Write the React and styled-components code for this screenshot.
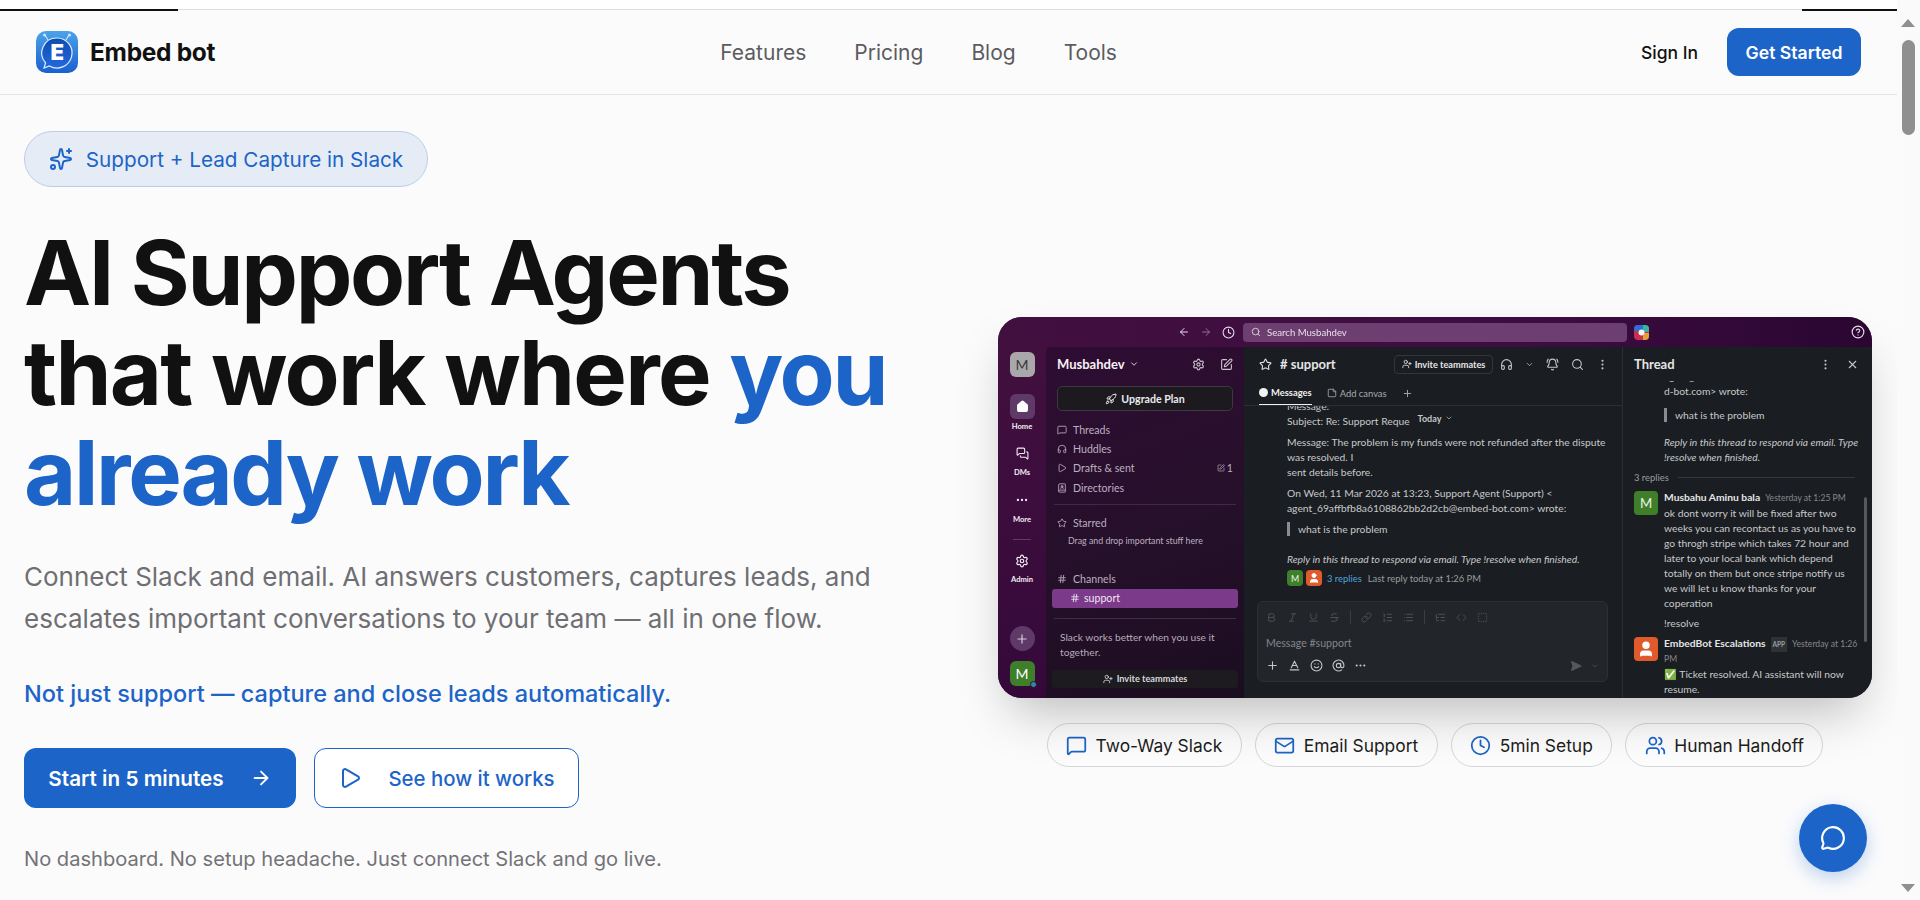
import styled, { createGlobalStyle } from "styled-components";
import {
  ArrowLeft,
  ArrowRight,
  AtSign,
  BellRing,
  Bold,
  ChevronDown,
  CircleHelp,
  Clock,
  Code,
  Ellipsis,
  EllipsisVertical,
  Hash,
  Headphones,
  House,
  Italic,
  Link,
  List,
  ListOrdered,
  ListTree,
  Mail,
  MessageCircle,
  MessageSquare,
  MessagesSquare,
  Play,
  Plus,
  Rocket,
  Search,
  SendHorizontal,
  Settings,
  Smile,
  SquarePen,
  SquareDashed,
  Star,
  Strikethrough,
  Underline,
  User,
  UserPlus,
  Users,
  X,
  BookUser,
  Sparkles,
  StickyNote,
  Baseline,
} from "lucide-react";

const BLUE = "#1c64c8";

const GlobalStyle = createGlobalStyle`
  * { box-sizing: border-box; }
  html, body { margin: 0; height: 900px; overflow: hidden; background: #fafafa; }
  body { font-family: Inter, "Liberation Sans", sans-serif; color: #111; }
`;

const Shell = styled.div`
  display: flex;
  width: 1920px;
  height: 900px;
`;

const Page = styled.div`
  position: relative;
  width: 1897px;
  height: 900px;
  overflow: hidden;
  background: #fbfbfc;
`;

const TopStrip = styled.div`
  position: relative;
  height: 10px;
  background: #fff;
  border-bottom: 1px solid #dcdcdf;
`;

const Loader = styled.div`
  position: absolute;
  top: 9px;
  height: 2px;
  background: #111;
  left: ${(p) => p.$left}px;
  width: ${(p) => p.$width}px;
`;

const Navbar = styled.header`
  height: 85px;
  padding: 0 36px;
  display: flex;
  align-items: center;
  justify-content: space-between;
  border-bottom: 1px solid #e3e4e8;
`;

const Brand = styled.div`
  display: flex;
  align-items: center;
  gap: 12px;
  font-size: 24.5px;
  font-weight: 700;
  letter-spacing: -0.3px;
  color: #111;
`;

const NavLinks = styled.nav`
  display: flex;
  gap: 48px;
  padding-right: 19px;
`;

const NavLink = styled.a`
  font-size: 21px;
  line-height: 28px;
  padding-top: 1px;
  color: #5c5c60;
`;

const NavRight = styled.div`
  display: flex;
  align-items: center;
  gap: 29px;
`;

const SignIn = styled.a`
  font-size: 17.5px;
  font-weight: 500;
  color: #111;
`;

const GetStarted = styled.button`
  width: 134px;
  height: 48px;
  border: 0;
  border-radius: 12px;
  background: ${BLUE};
  color: #fff;
  font: 600 17.6px Inter, sans-serif;
`;

const Hero = styled.main`
  display: grid;
  grid-template-columns: 1fr 874px;
  padding: 36px 25px 0 24px;
`;

const Left = styled.section`
  display: flex;
  flex-direction: column;
  align-items: flex-start;
`;

const Badge = styled.div`
  height: 56px;
  width: 404px;
  display: flex;
  align-items: center;
  justify-content: center;
  gap: 13px;
  border-radius: 28px;
  border: 1px solid #bccde9;
  background: #e6ecf5;
  color: ${BLUE};
  font-size: 20.7px;
  font-weight: 400;
`;

const Title = styled.h1`
  margin: 36px 0 0;
  font-size: 90px;
  line-height: 100px;
  font-weight: 700;
  letter-spacing: -2.3px;
  color: #111;
`;

const WideLine = styled.span`
  letter-spacing: -1.75px;
`;

const Accent = styled.span`
  color: ${BLUE};
`;

const Lede = styled.p`
  margin: 33px 0 0;
  font-size: 26px;
  line-height: 42px;
  color: #6f6f73;
`;

const Pitch = styled.p`
  margin: 38px 0 0;
  font-size: 23.5px;
  line-height: 32px;
  font-weight: 500;
  color: ${BLUE};
`;

const Actions = styled.div`
  display: flex;
  gap: 18px;
  margin-top: 38px;
`;

const PrimaryBtn = styled.button`
  width: 272px;
  height: 60px;
  display: flex;
  align-items: center;
  justify-content: center;
  gap: 26px;
  border: 0;
  border-radius: 12px;
  background: ${BLUE};
  color: #fff;
  font: 600 20.7px Inter, sans-serif;
`;

const GhostBtn = styled.button`
  width: 265px;
  height: 60px;
  display: flex;
  align-items: center;
  justify-content: center;
  gap: 26px;
  border: 1px solid ${BLUE};
  border-radius: 12px;
  background: #fff;
  color: ${BLUE};
  font: 500 20.4px Inter, sans-serif;
`;

const Note = styled.p`
  margin: 37px 0 0;
  font-size: 20.1px;
  line-height: 28px;
  color: #737377;
`;

const Right = styled.section`
  display: flex;
  flex-direction: column;
  align-items: stretch;
  margin-top: 186px;
`;

const Chips = styled.div`
  display: flex;
  justify-content: center;
  gap: 13px;
  margin-top: 25px;
`;

const Chip = styled.div`
  height: 44px;
  padding: 0 18.5px;
  display: flex;
  align-items: center;
  gap: 8.5px;
  border-radius: 22px;
  border: 1px solid #d4d6da;
  background: rgba(255, 255, 255, 0.35);
  font-size: 17.4px;
  color: #1d1d20;
  svg {
    color: ${BLUE};
  }
`;

const ChatFab = styled.button`
  position: absolute;
  left: 1799px;
  top: 804px;
  width: 68px;
  height: 68px;
  display: flex;
  align-items: center;
  justify-content: center;
  border: 0;
  border-radius: 50%;
  background: ${BLUE};
  color: #fff;
  box-shadow: 0 6px 18px rgba(28, 100, 200, 0.28);
`;

const ScrollTrack = styled.div`
  position: relative;
  width: 23px;
  height: 900px;
  background: #fafafa;
`;

const ScrollThumb = styled.div`
  position: absolute;
  left: 5px;
  top: 40px;
  width: 13px;
  height: 95px;
  border-radius: 7px;
  background: #8f8f8f;
`;

const ScrollArrow = styled.div`
  position: absolute;
  left: 4px;
  top: ${(p) => p.$top}px;
  border-left: 7.5px solid transparent;
  border-right: 7.5px solid transparent;
  ${(p) => (p.$down ? "border-top" : "border-bottom")}: 8px solid #8f8f8f;
`;

/* slack screenshot */

const SlackFrame = styled.div`
  position: relative;
  height: 381px;
  display: flex;
  flex-direction: column;
  border-radius: 24px;
  overflow: hidden;
  background: #3b0d3e;
  box-shadow: 0 25px 50px -12px rgba(0, 0, 0, 0.25);
  filter: blur(0.3px);
  font-family: Lato, "Liberation Sans", sans-serif;
  color: #d1d2d3;
  font-size: 10.3px;
`;

const SlackTop = styled.div`
  height: 30px;
  flex: none;
  display: flex;
  align-items: center;
  background: linear-gradient(90deg, #42103f, #3d0d42 60%, #2a0631);
  color: #e8dcea;
`;

const TopNav = styled.div`
  width: 245px;
  flex: none;
  display: flex;
  justify-content: flex-end;
  align-items: center;
  gap: 10px;
  padding-right: 8px;
`;

const SearchBar = styled.div`
  width: 384px;
  height: 19px;
  display: flex;
  align-items: center;
  gap: 6px;
  padding-left: 8px;
  border-radius: 4px;
  background: #6c3f70;
  color: #eadfeb;
  font-size: 9.6px;
`;

const WorkspaceIcon = styled.svg`
  margin-left: 7px;
`;

const HelpWrap = styled.div`
  margin-left: auto;
  padding-right: 7px;
  display: flex;
`;

const SlackBody = styled.div`
  flex: 1;
  min-height: 0;
  display: flex;
  background: linear-gradient(180deg, #42103f, #34093a);
`;

const Rail = styled.div`
  width: 48px;
  flex: none;
  display: flex;
  flex-direction: column;
  align-items: center;
  padding-top: 5px;
  color: #f3eef4;
`;

const RailSquare = styled.div`
  width: 25px;
  height: 25px;
  flex: none;
  display: flex;
  align-items: center;
  justify-content: center;
  border-radius: ${(p) => p.$radius || 6}px;
  background: ${(p) => p.$bg};
  color: ${(p) => p.$color || "#fff"};
  margin-top: ${(p) => p.$top || 0}px;
  font-size: 14px;
  position: relative;
`;

const RailIcon = styled.div`
  height: 17px;
  flex: none;
  display: flex;
  align-items: center;
  justify-content: center;
  margin-top: ${(p) => p.$top || 0}px;
`;

const RailLabel = styled.div`
  font-size: 7.6px;
  font-weight: 700;
  line-height: 10px;
  margin-top: ${(p) => p.$top || 0}px;
`;

const RailRule = styled.div`
  width: 18px;
  height: 1px;
  background: #5f3a62;
  margin-top: 15px;
`;

const StatusDot = styled.span`
  position: absolute;
  right: -2px;
  bottom: -2px;
  width: 7px;
  height: 7px;
  border-radius: 50%;
  background: #2b8a9f;
  border: 1px solid #34093a;
`;

const Sidebar = styled.div`
  width: 198px;
  flex: none;
  display: flex;
  flex-direction: column;
  padding: 0 6px;
  background: linear-gradient(160deg, #2f0c33 0%, #25102a 55%, #1b0d20 100%);
  border-top-left-radius: 5px;
  color: #bdaec0;
`;

const SideHead = styled.div`
  height: 34px;
  flex: none;
  display: flex;
  align-items: center;
  gap: 4px;
  padding: 0 5px;
  color: #f4f2f4;
  font-size: 13px;
  font-weight: 700;
`;

const SideHeadIcons = styled.div`
  margin-left: auto;
  display: flex;
  gap: 15px;
  color: #cfc4d1;
`;

const UpgradeBtn = styled.div`
  height: 25px;
  margin: 5px 5px 0;
  flex: none;
  display: flex;
  align-items: center;
  justify-content: center;
  gap: 4px;
  border: 1px solid #3c3a40;
  border-radius: 5px;
  background: #1c1a1f;
  color: #eceaed;
  font-size: 10.6px;
  font-weight: 700;
`;

const SideRow = styled.div`
  height: 19.3px;
  flex: none;
  display: flex;
  align-items: center;
  gap: 6px;
  padding: 0 5px;
  margin-top: ${(p) => p.$top || 0}px;
  font-size: 10.6px;
`;

const RowEnd = styled.span`
  margin-left: auto;
  display: flex;
  align-items: center;
  gap: 2px;
`;

const SideRule = styled.div`
  height: 1px;
  flex: none;
  margin: ${(p) => p.$top || 0}px 2px 0;
  background: #3f2c44;
`;

const DragHint = styled.div`
  padding-left: 16px;
  margin-top: 2px;
  line-height: 14px;
  font-size: 8.8px;
`;

const ActiveChannel = styled.div`
  height: 19px;
  flex: none;
  display: flex;
  align-items: center;
  gap: 4px;
  padding-left: 18px;
  border-radius: 3px;
  background: #7c3a8a;
  color: #f0e5f2;
  font-size: 10.6px;
`;

const Promo = styled.div`
  margin-top: 11px;
  padding: 0 8px;
  font-size: 10.2px;
  line-height: 15px;
  color: #b7aab9;
`;

const InviteWide = styled.div`
  height: 18px;
  flex: none;
  margin-top: 10px;
  display: flex;
  align-items: center;
  justify-content: center;
  gap: 4px;
  border-radius: 3px;
  background: #1d1a20;
  color: #d9d7da;
  font-size: 9.2px;
  font-weight: 700;
`;

const Main = styled.div`
  width: 379px;
  flex: none;
  display: flex;
  flex-direction: column;
  position: relative;
  background: #1a1d21;
  border-right: 1px solid #2c2e33;
`;

const MainHead = styled.div`
  height: 34px;
  flex: none;
  display: flex;
  align-items: center;
  padding: 0 13px 0 15px;
  color: #e4e5e6;
`;

const ChannelName = styled.div`
  margin-left: 8px;
  width: 114px;
  font-size: 13px;
  font-weight: 700;
`;

const InviteBtn = styled.div`
  width: 99px;
  height: 19px;
  display: flex;
  align-items: center;
  justify-content: center;
  gap: 3px;
  border: 1px solid #33363b;
  border-radius: 4px;
  font-size: 9.2px;
  font-weight: 700;
`;

const HeadIcons = styled.div`
  margin-left: auto;
  display: flex;
  align-items: center;
  gap: ${(p) => p.$gap || 12}px;
  color: #c4c6c8;
`;

const Tabs = styled.div`
  height: 25px;
  flex: none;
  display: flex;
  align-items: center;
  padding: 0 15px;
  gap: 15px;
  border-bottom: 1px solid #2c2e33;
  font-size: 9.4px;
  color: #a9abad;
`;

const Tab = styled.div`
  height: 100%;
  display: flex;
  align-items: center;
  gap: 3px;
  color: ${(p) => (p.$active ? "#f0f0f0" : "inherit")};
  font-weight: ${(p) => (p.$active ? 700 : 400)};
  border-bottom: ${(p) => (p.$active ? "1px solid #f0f0f0" : "0")};
`;

const TabDot = styled.span`
  width: 9px;
  height: 9px;
  border-radius: 50%;
  background: #f2f2f2;
`;

const Feed = styled.div`
  flex: 1;
  min-height: 0;
  overflow: hidden;
  display: flex;
  flex-direction: column;
  justify-content: flex-end;
  padding: 0 18px 15px 43px;
  line-height: 15px;
  color: #c8c9ca;
`;

const FeedLine = styled.div`
  margin-top: ${(p) => p.$top || 0}px;
  white-space: nowrap;
  flex: none;
  font-style: ${(p) => (p.$italic ? "italic" : "normal")};
`;

const Quote = styled.div`
  margin-top: ${(p) => p.$top || 0}px;
  padding-left: 8px;
  border-left: 3px solid #8a8c8f;
  flex: none;
  line-height: 14px;
`;

const DatePill = styled.div`
  position: absolute;
  left: 165px;
  top: 61px;
  width: 53px;
  height: 20px;
  display: flex;
  align-items: center;
  justify-content: center;
  gap: 4px;
  border-radius: 10px;
  background: #1a1d21;
  font-size: 9px;
  font-weight: 700;
  color: #c4c6c8;
`;

const ReplyBar = styled.div`
  display: flex;
  flex: none;
  align-items: center;
  gap: 3px;
  margin-top: 3px;
  font-size: 9.4px;
  color: #9b9d9f;
`;

const Avatar = styled.div`
  width: ${(p) => p.$size}px;
  height: ${(p) => p.$size}px;
  flex: none;
  display: flex;
  align-items: center;
  justify-content: center;
  border-radius: ${(p) => p.$radius || 4}px;
  background: ${(p) => p.$bg};
  color: #eef5e8;
  font-size: ${(p) => p.$size * 0.55}px;
`;

const ReplyLink = styled.span`
  color: #4fa3dc;
  margin: 0 3px 0 2px;
`;

const Composer = styled.div`
  height: 81px;
  flex: none;
  margin: 0 14px 16px 13px;
  padding: 7px 8px 0;
  display: flex;
  flex-direction: column;
  border: 1px solid #2d3034;
  border-radius: 6px;
  background: #222529;
  color: #50545a;
`;

const FormatRow = styled.div`
  display: flex;
  align-items: center;
  gap: 10px;
  height: 16px;
`;

const ToolRule = styled.span`
  width: 1px;
  height: 14px;
  background: #3a3d42;
`;

const Placeholder = styled.div`
  margin-top: 10px;
  font-size: 10.6px;
  line-height: 16px;
  color: #84878b;
`;

const ActionRow = styled.div`
  display: flex;
  align-items: center;
  gap: 9px;
  margin-top: 8px;
  color: #c4c6c8;
`;

const SendBox = styled.div`
  margin-left: auto;
  display: flex;
  gap: 9px;
  align-items: center;
  color: #55585c;
`;

const Thread = styled.div`
  flex: 1;
  min-width: 0;
  position: relative;
  display: flex;
  flex-direction: column;
  background: #1a1d21;
`;

const ThreadHead = styled.div`
  height: 34px;
  flex: none;
  display: flex;
  align-items: center;
  padding: 0 13px 0 11px;
  font-size: 13px;
  font-weight: 700;
  color: #e4e5e6;
`;

const ThreadBody = styled.div`
  flex: 1;
  min-height: 0;
  overflow: hidden;
  display: flex;
  flex-direction: column;
  padding: 0 8px 0 41px;
  line-height: 15px;
  color: #c8c9ca;
`;

const ThreadBar = styled.div`
  position: absolute;
  left: 241px;
  top: 150px;
  width: 3px;
  height: 145px;
  border-radius: 2px;
  background: #55585c;
`;

const RepliesRule = styled.div`
  display: flex;
  align-items: center;
  gap: 9px;
  margin: 5px 9px 0 -30px;
  font-size: 9.4px;
  color: #9b9d9f;
  flex: none;
  &::after {
    content: "";
    flex: 1;
    height: 1px;
    background: #35383c;
  }
`;

const Msg = styled.div`
  position: relative;
  flex: none;
  margin-top: ${(p) => p.$top || 0}px;
`;

const MsgAvatar = styled(Avatar)`
  position: absolute;
  left: -30px;
  top: 1px;
`;

const MsgHead = styled.div`
  display: flex;
  align-items: baseline;
  flex-wrap: wrap;
  gap: 0 5px;
`;

const Author = styled.span`
  font-weight: 700;
  color: #e4e5e6;
`;

const Stamp = styled.span`
  font-size: 8.6px;
  color: #85888b;
`;

const AppTag = styled.span`
  font-size: 6.5px;
  font-weight: 700;
  padding: 0 2px;
  background: #2e3135;
  color: #9b9d9f;
`;

function Logo() {
  return (
    <svg width="42" height="42" viewBox="0 0 42 42">
      <defs>
        <linearGradient id="lg" x1="0" y1="0" x2="0" y2="1">
          <stop offset="0" stopColor="#4aa3ea" />
          <stop offset="1" stopColor="#1b5fd0" />
        </linearGradient>
        <linearGradient id="lc" x1="0" y1="0" x2="0" y2="1">
          <stop offset="0" stopColor="#0e4cae" />
          <stop offset="1" stopColor="#2468e0" />
        </linearGradient>
      </defs>
      <rect width="42" height="42" rx="10" fill="url(#lg)" />
      <path d="M12 9 9 4M30 9l3-5" stroke="#cfe6fb" strokeWidth="1.2" />
      <circle cx="8.5" cy="4" r="1.5" fill="#cfe6fb" />
      <circle cx="33.5" cy="4" r="1.5" fill="#cfe6fb" />
      <path
        d="M21 7a15 15 0 1 1-7.6 27.9L8 37l1.6-5A15 15 0 0 1 21 7Z"
        fill="url(#lc)"
        stroke="#dcecfb"
        strokeWidth="1.2"
      />
      <text
        x="21"
        y="29"
        textAnchor="middle"
        fontFamily="Inter"
        fontWeight="900"
        fontSize="22"
        fill="#fff"
      >
        E
      </text>
    </svg>
  );
}

function SlackMock() {
  return (
    <SlackFrame>
      <SlackTop>
        <TopNav>
          <ArrowLeft size={12} />
          <ArrowRight size={12} color="#8d6f92" />
          <Clock size={13} />
        </TopNav>
        <SearchBar>
          <Search size={10} />
          Search Musbahdev
        </SearchBar>
        <WorkspaceIcon width="15" height="15" viewBox="0 0 15 15">
          <rect width="15" height="15" rx="4" fill="#c9304e" />
          <path d="M0 4a4 4 0 0 1 4-4h5v6H0Z" fill="#2d6fd6" />
          <path d="M9 0h2a4 4 0 0 1 4 4v3H9Z" fill="#36b5a2" />
          <path d="M9 8h6v3a4 4 0 0 1-4 4H9Z" fill="#e0a23a" />
          <circle cx="7.5" cy="7.5" r="3" fill="#f4f4f4" />
        </WorkspaceIcon>
        <HelpWrap>
          <CircleHelp size={14} />
        </HelpWrap>
      </SlackTop>
      <SlackBody>
        <Rail>
          <RailSquare $bg="#a9a7a9" $color="#3a3a3a">
            M
          </RailSquare>
          <RailSquare $bg="#5f3a68" $top={17}>
            <House size={13} fill="#fff" />
          </RailSquare>
          <RailLabel $top={2}>Home</RailLabel>
          <RailIcon $top={14}>
            <MessagesSquare size={13} />
          </RailIcon>
          <RailLabel $top={5}>DMs</RailLabel>
          <RailIcon $top={14}>
            <Ellipsis size={14} />
          </RailIcon>
          <RailLabel $top={6}>More</RailLabel>
          <RailRule />
          <RailIcon $top={12}>
            <Settings size={14} />
          </RailIcon>
          <RailLabel $top={5}>Admin</RailLabel>
          <RailSquare $bg="#5f3a68" $radius={13} $color="#d9cfdb" $top={42}>
            <Plus size={14} />
          </RailSquare>
          <RailSquare $bg="#3f7f2a" $top={10}>
            M
            <StatusDot />
          </RailSquare>
        </Rail>
        <Sidebar>
          <SideHead>
            Musbahdev <ChevronDown size={10} />
            <SideHeadIcons>
              <Settings size={13} />
              <SquarePen size={13} />
            </SideHeadIcons>
          </SideHead>
          <UpgradeBtn>
            <Rocket size={12} />
            Upgrade Plan
          </UpgradeBtn>
          <SideRow $top={9}>
            <MessageSquare size={10} />
            Threads
          </SideRow>
          <SideRow>
            <Headphones size={10} />
            Huddles
          </SideRow>
          <SideRow>
            <Play size={10} />
            Drafts &amp; sent
            <RowEnd>
              <SquarePen size={8} />1
            </RowEnd>
          </SideRow>
          <SideRow>
            <BookUser size={10} />
            Directories
          </SideRow>
          <SideRule $top={7} />
          <SideRow $top={8}>
            <Star size={10} />
            Starred
          </SideRow>
          <DragHint>Drag and drop important stuff here</DragHint>
          <SideRow $top={21}>
            <Hash size={10} />
            Channels
          </SideRow>
          <ActiveChannel>
            <Hash size={10} />
            support
          </ActiveChannel>
          <SideRule $top={10} />
          <Promo>
            Slack works better when you use it
            <br />
            together.
          </Promo>
          <InviteWide>
            <UserPlus size={10} />
            Invite teammates
          </InviteWide>
        </Sidebar>
        <Main>
          <MainHead>
            <Star size={13} />
            <ChannelName># support</ChannelName>
            <InviteBtn>
              <UserPlus size={10} />
              Invite teammates
            </InviteBtn>
            <HeadIcons>
              <Headphones size={13} />
              <ChevronDown size={9} />
              <BellRing size={13} />
              <Search size={13} />
              <EllipsisVertical size={13} />
            </HeadIcons>
          </MainHead>
          <Tabs>
            <Tab $active>
              <TabDot />
              Messages
            </Tab>
            <Tab>
              <StickyNote size={10} />
              Add canvas
            </Tab>
            <Plus size={11} />
          </Tabs>
          <Feed>
            <FeedLine>Message:</FeedLine>
            <FeedLine>Subject: Re: Support Reque</FeedLine>
            <FeedLine $top={6}>
              Message: The problem is my funds were not refunded after the dispute
            </FeedLine>
            <FeedLine>was resolved. I</FeedLine>
            <FeedLine>sent details before.</FeedLine>
            <FeedLine $top={6}>
              On Wed, 11 Mar 2026 at 13:23, Support Agent (Support) &lt;
            </FeedLine>
            <FeedLine>agent_69affbfb8a6108862bb2d2cb@embed-bot.com&gt; wrote:</FeedLine>
            <Quote $top={6}>what is the problem</Quote>
            <FeedLine $italic $top={16}>
              Reply in this thread to respond via email. Type !resolve when finished.
            </FeedLine>
            <ReplyBar>
              <Avatar $size={16} $bg="#3f7f2a">
                M
              </Avatar>
              <Avatar $size={16} $bg="#e05a2b">
                <User size={12} color="#fff" fill="#fff" />
              </Avatar>
              <ReplyLink>3 replies</ReplyLink>
              Last reply today at 1:26 PM
            </ReplyBar>
          </Feed>
          <DatePill>
            Today <ChevronDown size={8} />
          </DatePill>
          <Composer>
            <FormatRow>
              <Bold size={11} />
              <Italic size={11} />
              <Underline size={11} />
              <Strikethrough size={11} />
              <ToolRule />
              <Link size={11} />
              <ListOrdered size={11} />
              <List size={11} />
              <ToolRule />
              <ListTree size={11} />
              <Code size={11} />
              <SquareDashed size={11} />
            </FormatRow>
            <Placeholder>Message #support</Placeholder>
            <ActionRow>
              <Plus size={13} />
              <Baseline size={13} />
              <Smile size={13} />
              <AtSign size={13} />
              <Ellipsis size={13} />
              <SendBox>
                <SendHorizontal size={12} fill="currentColor" />
                <ChevronDown size={8} />
              </SendBox>
            </ActionRow>
          </Composer>
        </Main>
        <Thread>
          <ThreadHead>
            Thread
            <HeadIcons $gap={14}>
              <EllipsisVertical size={13} />
              <X size={13} />
            </HeadIcons>
          </ThreadHead>
          <ThreadBody>
            <FeedLine $top={-12}>agent_69affbfb8a6108862bb2d2cb@embe</FeedLine>
            <FeedLine>d-bot.com&gt; wrote:</FeedLine>
            <Quote $top={9}>what is the problem</Quote>
            <FeedLine $italic $top={13}>
              Reply in this thread to respond via email. Type
            </FeedLine>
            <FeedLine $italic>!resolve when finished.</FeedLine>
            <RepliesRule>3 replies</RepliesRule>
            <Msg $top={5}>
              <MsgAvatar $size={24} $bg="#3f7f2a">
                M
              </MsgAvatar>
              <MsgHead>
                <Author>Musbahu Aminu bala</Author>
                <Stamp>Yesterday at 1:25 PM</Stamp>
              </MsgHead>
              ok dont worry it will be fixed after two
              <br />
              weeks you can recontact us as you have to
              <br />
              go throgh stripe which takes 72 hour and
              <br />
              later to your local bank which depend
              <br />
              totally on them but once stripe notify us
              <br />
              we will let u know thanks for your
              <br />
              coperation
              <FeedLine $top={5}>!resolve</FeedLine>
            </Msg>
            <Msg $top={5}>
              <MsgAvatar $size={24} $bg="#e05a2b">
                <User size={18} color="#fff" fill="#fff" />
              </MsgAvatar>
              <MsgHead>
                <Author>EmbedBot Escalations</Author>
                <AppTag>APP</AppTag>
                <Stamp>Yesterday at 1:26</Stamp>
                <Stamp>PM</Stamp>
              </MsgHead>
              ✅ Ticket resolved. AI assistant will now
              <br />
              resume.
            </Msg>
          </ThreadBody>
          <ThreadBar />
        </Thread>
      </SlackBody>
    </SlackFrame>
  );
}

export default function App() {
  return (
    <>
      <GlobalStyle />
      <Shell>
        <Page>
          <TopStrip>
            <Loader $left={0} $width={178} />
            <Loader $left={1802} $width={95} />
          </TopStrip>
          <Navbar>
            <Brand>
              <Logo />
              Embed bot
            </Brand>
            <NavLinks>
              <NavLink>Features</NavLink>
              <NavLink>Pricing</NavLink>
              <NavLink>Blog</NavLink>
              <NavLink>Tools</NavLink>
            </NavLinks>
            <NavRight>
              <SignIn>Sign In</SignIn>
              <GetStarted>Get Started</GetStarted>
            </NavRight>
          </Navbar>
          <Hero>
            <Left>
              <Badge>
                <Sparkles size={24} />
                Support + Lead Capture in Slack
              </Badge>
              <Title>
                AI Support Agents
                <br />
                <WideLine>that work where </WideLine>
                <Accent>you</Accent>
                <br />
                <Accent>already work</Accent>
              </Title>
              <Lede>
                Connect Slack and email. AI answers customers, captures leads, and
                <br />
                escalates important conversations to your team — all in one flow.
              </Lede>
              <Pitch>Not just support — capture and close leads automatically.</Pitch>
              <Actions>
                <PrimaryBtn>
                  Start in 5 minutes
                  <ArrowRight size={22} />
                </PrimaryBtn>
                <GhostBtn>
                  <Play size={24} />
                  See how it works
                </GhostBtn>
              </Actions>
              <Note>No dashboard. No setup headache. Just connect Slack and go live.</Note>
            </Left>
            <Right>
              <SlackMock />
              <Chips>
                <Chip>
                  <MessageSquare size={21} />
                  Two-Way Slack
                </Chip>
                <Chip>
                  <Mail size={21} />
                  Email Support
                </Chip>
                <Chip>
                  <Clock size={21} />
                  5min Setup
                </Chip>
                <Chip>
                  <Users size={21} />
                  Human Handoff
                </Chip>
              </Chips>
            </Right>
          </Hero>
          <ChatFab>
            <MessageCircle size={26} />
          </ChatFab>
        </Page>
        <ScrollTrack>
          <ScrollArrow $top={19} />
          <ScrollThumb />
          <ScrollArrow $top={884} $down />
        </ScrollTrack>
      </Shell>
    </>
  );
}
